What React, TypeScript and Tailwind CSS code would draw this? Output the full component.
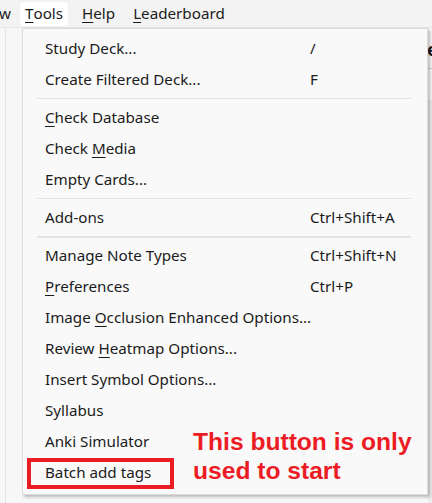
type Item = { label: React.ReactNode; shortcut?: string } | "sep" | "sep2";

function U({ children }: { children: React.ReactNode }) {
  return <span className="underline underline-offset-[3px] decoration-1">{children}</span>;
}

const items: Item[] = [
  { label: "Study Deck...", shortcut: "/" },
  { label: "Create Filtered Deck...", shortcut: "F" },
  "sep",
  { label: <><U>C</U>heck Database</> },
  { label: <>Check <U>M</U>edia</> },
  { label: "Empty Cards..." },
  "sep",
  { label: "Add-ons", shortcut: "Ctrl+Shift+A" },
  "sep2",
  { label: "Manage Note Types", shortcut: "Ctrl+Shift+N" },
  { label: <><U>P</U>references</>, shortcut: "Ctrl+P" },
  { label: <>Image <U>O</U>cclusion Enhanced Options...</> },
  { label: <>Review <U>H</U>eatmap Options...</> },
  { label: "Insert Symbol Options..." },
  { label: "Syllabus" },
  { label: "Anki Simulator" },
  { label: "Batch add tags" },
];

export default function App() {
  return (
    <div
      className="relative w-[432px] h-[503px] overflow-hidden bg-[#f7f7f7] text-[#1b1b1b]"
      style={{ fontFamily: '"Noto Sans", "Open Sans", sans-serif' }}
    >
      {/* menu bar */}
      <div className="h-[28px] bg-[#f3f3f3] border-b border-[#e6e6e6] flex items-center text-[15.2px]">
        <span className="ml-[-1px] w-[21px]">w</span>
        <span className="h-[24px] px-[5px] flex items-center rounded-[4px] bg-white">
          <U>T</U>ools
        </span>
        <span className="ml-[14px]"><U>H</U>elp</span>
        <span className="ml-[18px]"><U>L</U>eaderboard</span>
      </div>

      {/* background page bits */}
      <div className="absolute left-[5px] top-[28px] bottom-0 w-px bg-[#e4e4e4]" />
      <div className="absolute left-[427px] top-[40px] text-[18px] font-bold leading-none">e</div>
      <div className="absolute left-[428px] top-[68px] w-[4px] h-px bg-[#cfcfcf]" />
      <div className="absolute left-[428px] top-[100px] right-0 bottom-0 bg-[#ececec]" />

      {/* dropdown */}
      <div className="absolute left-[22px] top-[28px] w-[406px] bg-[#f9f9f9] border border-[#dcdcdc] shadow-[2px_2px_3px_rgba(0,0,0,0.25)] pt-[4px] pb-[6px] text-[15.2px]">
        {items.map((it, i) =>
          it === "sep" || it === "sep2" ? (
            <div key={i} className="h-[7px] flex items-center pl-[14px] pr-[16px]">
              <div className={`w-full bg-[#e3e3e3] ${it === "sep2" ? "h-[2px]" : "h-px"}`} />
            </div>
          ) : (
            <div key={i} className="h-[31px] grid grid-cols-[265px_1fr] items-center pl-[22px]">
              <span className="whitespace-nowrap">{it.label}</span>
              <span className="whitespace-nowrap">{it.shortcut}</span>
            </div>
          )
        )}
      </div>

      {/* annotation */}
      <div className="absolute left-[27px] top-[458px] w-[147px] h-[31px] border-4 border-[#ec1c24]" />
      <div
        className="absolute left-[193px] top-[427px] text-[24.6px] font-bold leading-[29px] text-[#ec1c24]"
        style={{ fontFamily: '"Liberation Sans", Arial, sans-serif' }}
      >
        This button is only
        <br />
        used to start
      </div>
    </div>
  );
}
